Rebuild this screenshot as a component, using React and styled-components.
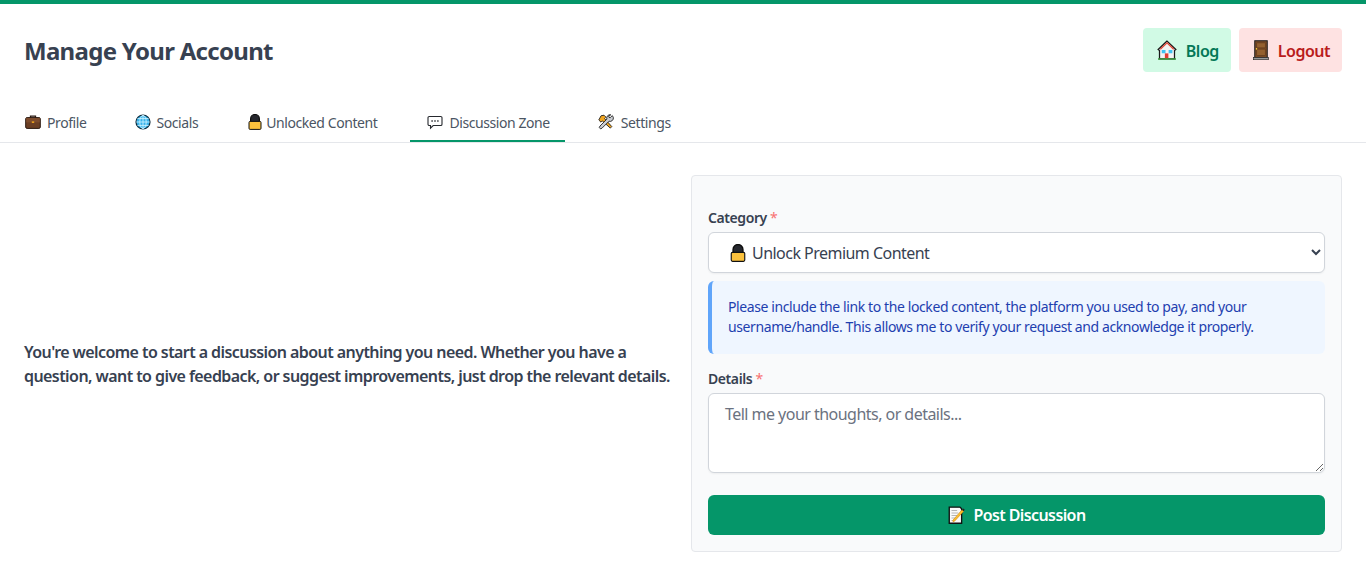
import React from "react";
import styled, { createGlobalStyle } from "styled-components";

const Global = createGlobalStyle`
  * { box-sizing: border-box; }
  html, body { margin: 0; padding: 0; background: #fff; }
  body { font-family: "Noto Sans", "Open Sans", "Liberation Sans", sans-serif; color: #374151; }
`;

const Page = styled.div`
  border-top: 4px solid #059669;
  min-height: 573px;
  background: #fff;
`;
const Header = styled.header`
  display: flex;
  justify-content: space-between;
  align-items: flex-start;
  padding: 24px 24px 0;
  height: 92px;
`;
const Title = styled.h1`
  margin: 0;
  font-size: 24px;
  line-height: 46px;
  font-weight: 700;
  color: #374151;
  letter-spacing: -0.7px;
`;
const HeaderActions = styled.div`
  display: flex;
  gap: 8px;
`;
const ActionLink = styled.a`
  display: flex;
  align-items: center;
  gap: ${(p) => p.$gap}px;
  height: 44px;
  padding: 0 12px 0 ${(p) => p.$inset}px;
  border-radius: 4px;
  font-size: 16px;
  font-weight: 600;
  letter-spacing: -0.5px;
  background: ${(p) => (p.$tone === "red" ? "#fee2e2" : "#d1fae5")};
  color: ${(p) => (p.$tone === "red" ? "#b91c1c" : "#047857")};
`;
const ActionLabel = styled.span`
  padding-top: 2px;
`;
const Tabs = styled.nav`
  display: flex;
  gap: 16px;
  padding: 0 8px;
  height: 47px;
  border-bottom: 1px solid #e5e7eb;
`;
const Tab = styled.a`
  display: flex;
  align-items: center;
  gap: ${(p) => p.$gap}px;
  height: 46px;
  padding: 8px ${(p) => p.$end}px 0 17px;
  font-size: 14px;
  letter-spacing: -0.42px;
  color: #4b5563;
  border-bottom: 2px solid ${(p) => (p.$active ? "#059669" : "transparent")};
`;
const Content = styled.main`
  display: grid;
  grid-template-columns: 1fr 1fr;
  gap: 16px;
  padding: 32px 24px 0;
`;
const Intro = styled.p`
  margin: 0;
  align-self: center;
  font-size: 16px;
  line-height: 24px;
  font-weight: 600;
  letter-spacing: -0.57px;
  color: #374151;
`;
const Panel = styled.form`
  display: flex;
  flex-direction: column;
  padding: 32px 16px 16px;
  height: 377px;
  background: #f9fafb;
  border: 1px solid #e5e7eb;
  border-radius: 4px;
`;
const Label = styled.label`
  display: block;
  font-size: 14px;
  line-height: 20px;
  font-weight: 600;
  letter-spacing: -0.42px;
  color: #374151;
  margin-bottom: 4px;
`;
const Required = styled.span`
  color: #f87171;
  font-weight: 400;
`;
const SelectWrap = styled.div`
  position: relative;
`;
const Select = styled.select`
  display: block;
  width: 100%;
  height: 41px;
  padding: 0 12px 0 39px;
  font-family: inherit;
  font-size: 16px;
  letter-spacing: -0.53px;
  color: #374151;
  background: #fff;
  border: 1px solid #d1d5db;
  border-radius: 6px;
  box-shadow: 0 1px 2px rgba(0, 0, 0, 0.05);
`;
const SelectEmoji = styled.span`
  position: absolute;
  left: 21px;
  top: 12px;
  display: flex;
`;
const Notice = styled.div`
  margin-top: 8px;
  height: 73px;
  padding: 16px 16px 0 16px;
  background: #eff6ff;
  border-left: 4px solid #60a5fa;
  border-radius: 6px;
  font-size: 14px;
  line-height: 20px;
  letter-spacing: -0.4px;
  color: #1e40af;
`;
const DetailsField = styled.div`
  margin-top: 15px;
`;
const TextArea = styled.textarea`
  display: block;
  width: 100%;
  height: 80px;
  padding: 8px 16px;
  font-family: inherit;
  font-size: 16px;
  line-height: 24px;
  letter-spacing: -0.53px;
  color: #374151;
  background: #fff;
  border: 1px solid #d1d5db;
  border-radius: 6px;
  box-shadow: 0 1px 2px rgba(0, 0, 0, 0.05);
  &::placeholder { color: #6b7280; opacity: 1; }
`;
const Submit = styled.button`
  display: flex;
  align-items: center;
  justify-content: center;
  gap: 8px;
  margin-top: 22px;
  height: 40px;
  border: 0;
  border-radius: 6px;
  background: #059669;
  color: #fff;
  font-family: inherit;
  font-size: 16px;
  font-weight: 600;
  letter-spacing: -0.6px;
`;

const Glyph = styled.svg`
  flex: none;
  display: block;
`;

const emoji = {
  briefcase: (
    <>
      <path d="M5.500 4V2.200h5V4" fill="none" stroke="#2b1a12" strokeWidth="1.300" />
      <rect x="0.700" y="3.600" width="14.600" height="10.800" rx="1.400" fill="#6b3f24" stroke="#2b1a12" />
      <rect x="1.200" y="4" width="13.600" height="4.400" fill="#7d4c2d" />
      <rect x="6.800" y="7.400" width="2.400" height="1.500" fill="#f4a91f" />
    </>
  ),
  globe: (
    <>
      <circle cx="8" cy="8" r="7" fill="#36b2ea" stroke="#0e2a3a" strokeWidth="1.200" />
      <g fill="none" stroke="#c9f0ff" strokeWidth="0.900">
        <ellipse cx="8" cy="8" rx="3.200" ry="6.600" />
        <path d="M8 1.200v13.600M1.400 8h13.200M2.400 4.600h11.200M2.400 11.400h11.200" />
      </g>
    </>
  ),
  lock: (
    <>
      <path d="M3.600 8V4.900a4.400 4.400 0 0 1 8.800 0V8z" fill="#26282e" stroke="#0d0d0d" strokeWidth="1.200" />
      <rect x="2" y="7.400" width="12" height="8" rx="1.100" fill="#fcc23d" stroke="#111" strokeWidth="1" />
    </>
  ),
  speech: (
    <>
      <path d="M2.300 2.500h11.400a1.300 1.300 0 0 1 1.300 1.300v6.400a1.300 1.300 0 0 1-1.300 1.300H6.200l-2.700 2.600v-2.600H2.300A1.300 1.300 0 0 1 1 10.200V3.800a1.300 1.300 0 0 1 1.300-1.300z" fill="#fff" stroke="#26292e" strokeWidth="1.100" />
      <path d="M4.400 7h1.400M7.300 7h1.400M10.200 7h1.400" stroke="#26292e" strokeWidth="1.400" />
    </>
  ),
  tools: (
    <>
      <path d="M3 1.800l3-.6 2 2-1.400 1.400 7.200 8-1.500 1.500-8-7.200-1.300 1.300-2.200-2.200z" fill="#f0a520" stroke="#222" strokeWidth="0.900" />
      <path d="M14.300 1.600l-2.100 2.100-1.200-.3-.3-1.200L12.800.8a3.300 3.300 0 0 0-3.900 4.300L2 12l-.7 1.600 1.300 1.300 1.500-.8 6.900-6.900a3.300 3.300 0 0 0 4.300-3.900z" fill="#c9ccd1" stroke="#222" strokeWidth="0.900" />
    </>
  ),
  house: (
    <>
      <path d="M8 .8L.9 7.600l1.100.9V15h12V8.500l1.100-.9z" fill="#f3f3f3" stroke="#1a1a1a" strokeWidth="1" />
      <path d="M8 1.600L2.200 7 3 7.700 8 3l5 4.700.8-.7z" fill="#e04a3a" />
      <rect x="3.800" y="8" width="3" height="2.600" fill="#3fc2f0" />
      <rect x="9.300" y="8" width="3" height="2.600" fill="#3fc2f0" />
      <rect x="6.300" y="10.700" width="2.800" height="4.300" fill="#e03c31" />
      <rect x="0.800" y="14.600" width="14.400" height="1.200" fill="#3a9b3f" />
    </>
  ),
  door: (
    <>
      <rect x="3" y="0.600" width="10" height="13.600" fill="#7a4a26" stroke="#1c1c1c" strokeWidth="0.800" />
      <rect x="4.600" y="2.300" width="6.800" height="4" fill="#94602f" stroke="#5d381a" strokeWidth="0.500" />
      <rect x="4.600" y="7.300" width="6.800" height="5.200" fill="#94602f" stroke="#5d381a" strokeWidth="0.500" />
      <rect x="3.900" y="6.400" width="1" height="1.300" fill="#f4c534" />
      <rect x="2" y="14" width="12" height="1.800" fill="#9a9a9a" stroke="#1c1c1c" strokeWidth="0.500" />
    </>
  ),
  memo: (
    <>
      <path d="M2 1h9.500l1.500 1.500V15.300H2z" fill="#fafafa" stroke="#111" strokeWidth="1.200" />
      <path d="M4 4h5M4 6.200h6M4 8.400h5M4 10.600h4M4 12.800h3" stroke="#b5b5b5" strokeWidth="0.900" />
      <path d="M5.300 12.600l.1 1.500 1.300-.6 8-8.800-1.400-1.200z" fill="#fbc02d" stroke="#d68a10" strokeWidth="0.600" />
      <path d="M13.400 3.300l1.400 1.300 1-1.200-1.300-1.200z" fill="#222" />
    </>
  ),
};

const Emoji = ({ name, size = 16 }) => (
  <Glyph width={size} height={size} viewBox="0 0 16 16" aria-hidden="true">
    {emoji[name]}
  </Glyph>
);

const tabs = [
  ["briefcase", "Profile", 6, 16],
  ["globe", "Socials", 5, 16],
  ["lock", "Unlocked Content", 3, 17],
  ["speech", "Discussion Zone", 6, 15],
  ["tools", "Settings", 7, 16],
];

export default function App() {
  return (
    <>
      <Global />
      <Page>
        <Header>
          <Title>Manage Your Account</Title>
          <HeaderActions>
            <ActionLink $tone="green" $inset={14} $gap={9}>
              <Emoji name="house" size={20} />
              <ActionLabel>Blog</ActionLabel>
            </ActionLink>
            <ActionLink $tone="red" $inset={12} $gap={7}>
              <Emoji name="door" size={20} />
              <ActionLabel>Logout</ActionLabel>
            </ActionLink>
          </HeaderActions>
        </Header>
        <Tabs>
          {tabs.map(([icon, label, gap, end]) => (
            <Tab key={label} $gap={gap} $end={end} $active={label === "Discussion Zone"}>
              <Emoji name={icon} /> {label}
            </Tab>
          ))}
        </Tabs>
        <Content>
          <Intro>
            You're welcome to start a discussion about anything you need. Whether you have a
            question, want to give feedback, or suggest improvements, just drop the relevant details.
          </Intro>
          <Panel>
            <Label>
              Category <Required>*</Required>
            </Label>
            <SelectWrap>
              <SelectEmoji>
                <Emoji name="lock" size={18} />
              </SelectEmoji>
              <Select defaultValue="unlock">
                <option value="unlock">Unlock Premium Content</option>
                <option value="feedback">Feedback</option>
              </Select>
            </SelectWrap>
            <Notice>
              Please include the link to the locked content, the platform you used to pay, and your
              username/handle. This allows me to verify your request and acknowledge it properly.
            </Notice>
            <DetailsField>
              <Label>
                Details <Required>*</Required>
              </Label>
              <TextArea placeholder="Tell me your thoughts, or details..." />
            </DetailsField>
            <Submit type="button">
              <Emoji name="memo" size={18} /> Post Discussion
            </Submit>
          </Panel>
        </Content>
      </Page>
    </>
  );
}
